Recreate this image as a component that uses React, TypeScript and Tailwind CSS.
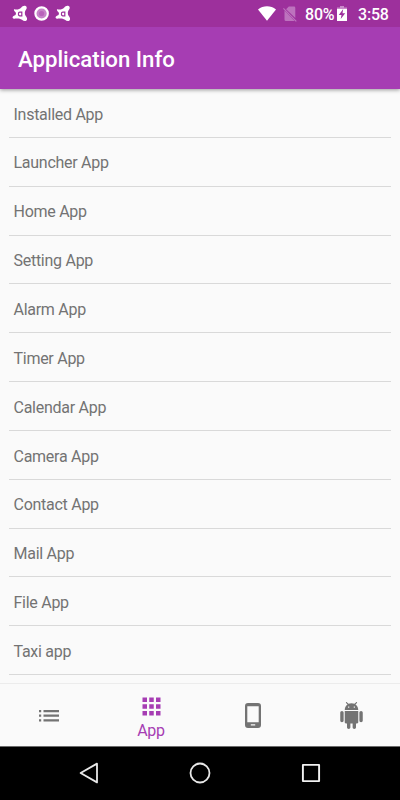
import { MdApps } from 'react-icons/md'

const apps = [
  'Installed App',
  'Launcher App',
  'Home App',
  'Setting App',
  'Alarm App',
  'Timer App',
  'Calendar App',
  'Camera App',
  'Contact App',
  'Mail App',
  'File App',
  'Taxi app',
]

function AvastIcon() {
  return (
    <svg width="16" height="17" viewBox="0 0 16 17" aria-hidden="true">
      <path
        d="M2.4 4.2C5 5 7.3 4.4 9.3 2.5C10.5 1 12 .2 13.7 1C15.2 1.9 15 3.8 13.6 5.2C12.6 6.5 12.5 9 13.6 10.8C15 12.7 15.7 14.2 14.5 15.4C13.2 16.6 11.4 16 10 14.8C7.8 13.4 5.7 13.2 3.6 13.6C1.8 13.9.4 13.4.6 12.2C.8 11.1 2.2 10.7 3.2 10.2C4.2 9.2 4.2 8 3.3 7C2 5.9 1.4 4 2.4 4.2Z"
        fill="#fff"
      />
      <path
        d="M9.8 7.2V10.8H7.7Q6.4 10.6 6.4 9Q6.4 7.2 7.8 7.2Z"
        fill="none"
        stroke="#9d309c"
        strokeWidth="1.2"
      />
    </svg>
  )
}

function ListIcon() {
  return (
    <svg width="20" height="12" viewBox="0 0 20 12" fill="currentColor" aria-hidden="true">
      <path d="M0 0H2.2V2.2H0ZM0 4.6H2.2V6.8H0ZM0 9.2H2.2V11.4H0ZM4.5 0H20V2.2H4.5ZM4.5 4.6H20V6.8H4.5ZM4.5 9.2H20V11.4H4.5Z" />
    </svg>
  )
}

function PhoneIcon() {
  return (
    <svg width="16" height="25" viewBox="0 0 16 25" aria-hidden="true">
      <path
        d="M3 0H13Q16 0 16 3V22Q16 25 13 25H3Q0 25 0 22V3Q0 0 3 0ZM2.3 3.3V19.2H13.7V3.3ZM5.8 21.2V22.4H10.2V21.2Z"
        fill="currentColor"
        fillRule="evenodd"
      />
    </svg>
  )
}

function AndroidIcon() {
  return (
    <svg width="27" height="27" viewBox="0 0 24 24" fill="currentColor" aria-hidden="true">
      <path d="M6 18c0 .55.45 1 1 1h1v3.5c0 .83.67 1.5 1.5 1.5s1.5-.67 1.5-1.5V19h2v3.5c0 .83.67 1.5 1.5 1.5s1.5-.67 1.5-1.5V19h1c.55 0 1-.45 1-1V8H6v10zM3.5 8C2.67 8 2 8.67 2 9.5v7c0 .83.67 1.5 1.5 1.5S5 17.33 5 16.5v-7C5 8.67 4.33 8 3.5 8zm17 0c-.83 0-1.5.67-1.5 1.5v7c0 .83.67 1.5 1.5 1.5s1.5-.67 1.5-1.5v-7c0-.83-.67-1.5-1.5-1.5zm-4.97-5.84l1.3-1.3c.2-.2.2-.51 0-.71-.2-.2-.51-.2-.71 0l-1.48 1.48C13.85 1.23 12.95 1 12 1c-.96 0-1.86.23-2.66.63L7.85.15c-.2-.2-.51-.2-.71 0-.2.2-.2.51 0 .71l1.31 1.31C6.97 3.26 6 5.01 6 7h12c0-1.99-.97-3.75-2.47-4.84zM10 5H9V4h1v1zm5 0h-1V4h1v1z" />
    </svg>
  )
}

function StatusBar() {
  return (
    <div className="flex h-[27px] items-center bg-[#9d309c] pr-[12px] pl-[12px] text-white">
      <AvastIcon />
      <svg className="ml-[6px]" width="16" height="16" viewBox="0 0 16 16" aria-hidden="true">
        <circle cx="7.6" cy="7.5" r="6.2" fill="#c783c9" stroke="#fff" strokeWidth="2.2" />
        <circle cx="7.6" cy="7.5" r="2.6" fill="#b862bb" />
      </svg>
      <span className="ml-[5px] flex">
        <AvastIcon />
      </span>

      <svg className="ml-auto" width="18" height="15" viewBox="0 0 18 15" aria-hidden="true">
        <path d="M0 3.4C5.2-.9 12.8-.9 18 3.4L9 14.8Z" fill="#fff" />
      </svg>
      <svg className="ml-[7px]" width="14" height="16" viewBox="0 0 14 16" aria-hidden="true">
        <path
          d="M5.8.6H11Q12.3.6 12.3 2V12L3.1 3.2ZM1.5 4.6L11.7 14.9H3Q1.5 14.9 1.5 13.4Z"
          fill="#bd73be"
        />
        <path d="M.4 2.3L13.3 15.4" stroke="#bd73be" strokeWidth="1.2" />
      </svg>
      <span className="ml-[8px] w-[30px] pt-[2px] text-[16px] leading-none font-medium tracking-[-0.2px]">80%</span>
      <svg className="ml-[2px]" width="10" height="15" viewBox="0 0 10 15" aria-hidden="true">
        <path d="M3 0H7V1.5H10V3.2H0V1.5H3Z" fill="#c98bca" />
        <path d="M0 3H10V15H0Z" fill="#fff" />
        <path d="M6.2 3L1.8 9H4.5L3.7 13L8.2 7.2H5.5Z" fill="#9d309c" />
      </svg>
      <span className="ml-[11px] w-[30px] pt-[2px] text-[16px] leading-none font-medium tracking-[-0.2px]">3:58</span>
    </div>
  )
}

function TabBar() {
  return (
    <nav className="flex h-[63px] shrink-0 border-t border-[#ececec] bg-[#fafafa] text-[#737373]">
      <div className="flex w-[98px] items-center justify-center pt-px">
        <ListIcon />
      </div>
      <div className="flex w-[106px] flex-col items-center pt-[9px] text-[#a63db3]">
        <MdApps size={27} />
        <span className="mt-[2px] text-[16px] leading-[18px] tracking-[-0.3px]">App</span>
      </div>
      <div className="flex w-[98px] items-center justify-center">
        <PhoneIcon />
      </div>
      <div className="flex w-[98px] items-center justify-center">
        <AndroidIcon />
      </div>
    </nav>
  )
}

function SystemNav() {
  return (
    <div className="flex h-[54px] shrink-0 items-center justify-center gap-[89px] border-t border-[#6b6b6b] bg-black pb-[2px]">
      <svg width="22" height="22" viewBox="0 0 22 22" fill="none" stroke="#e8e8e8" strokeWidth="1.8" strokeLinejoin="round">
        <path d="M19 1.6V20.4L2.6 11Z" />
      </svg>
      <svg width="22" height="22" viewBox="0 0 22 22" fill="none" stroke="#e8e8e8" strokeWidth="1.8">
        <circle cx="11" cy="11" r="9.5" />
      </svg>
      <svg width="22" height="22" viewBox="0 0 22 22" fill="none" stroke="#f2f2f2" strokeWidth="1.9" strokeLinejoin="round">
        <path d="M2.9 2.9H19.1V19.1H2.9Z" />
      </svg>
    </div>
  )
}

export default function App() {
  return (
    <div className="flex h-[800px] w-[400px] flex-col overflow-hidden bg-[#fafafa] font-['Roboto',sans-serif]">
      <header className="relative z-10 shrink-0 shadow-[0_1px_4px_rgba(0,0,0,0.4)]">
        <StatusBar />
        <div className="flex h-[62px] items-center bg-[#a63db3] px-[18px] pt-[2px]">
          <h1 className="text-[22.2px] leading-none font-medium text-white">Application Info</h1>
        </div>
      </header>

      <ul className="min-h-0 flex-1 overflow-hidden px-[9px]">
        {apps.map((name) => (
          <li
            className="flex h-[48.85px] items-center border-b border-[#d9d9d9] pt-[3.4px] pl-[4.5px] text-[16px] tracking-[-0.27px] text-[#737373]"
            key={name}
          >
            {name}
          </li>
        ))}
      </ul>

      <TabBar />
      <SystemNav />
    </div>
  )
}
